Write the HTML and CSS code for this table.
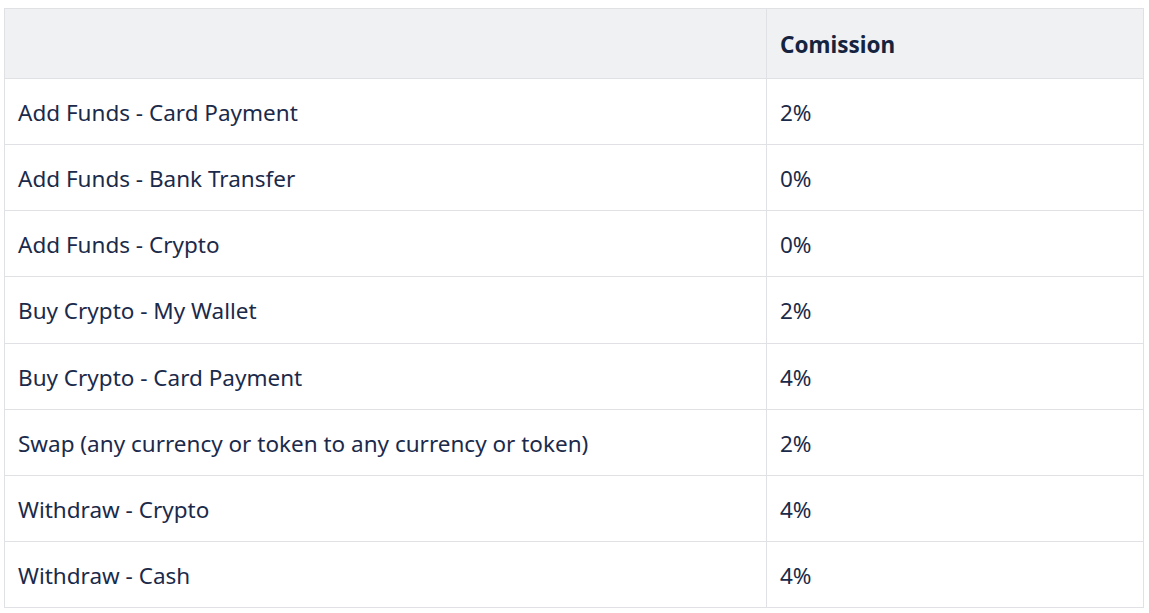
FILE: index.html
```html
<!DOCTYPE html>
<html>
<head>
<meta charset="utf-8">
<link rel="stylesheet" href="styles.css">
</head>
<body>
<table class="fees">
  <colgroup>
    <col class="col-name">
    <col class="col-fee">
  </colgroup>
  <thead>
    <tr><th></th><th>Comission</th></tr>
  </thead>
  <tbody>
    <tr><td>Add Funds - Card Payment</td><td>2%</td></tr>
    <tr><td>Add Funds - Bank Transfer</td><td>0%</td></tr>
    <tr><td>Add Funds - Crypto</td><td>0%</td></tr>
    <tr><td>Buy Crypto - My Wallet</td><td>2%</td></tr>
    <tr><td>Buy Crypto - Card Payment</td><td>4%</td></tr>
    <tr><td>Swap (any currency or token to any currency or token)</td><td>2%</td></tr>
    <tr><td>Withdraw - Crypto</td><td>4%</td></tr>
    <tr><td>Withdraw - Cash</td><td>4%</td></tr>
  </tbody>
</table>
</body>
</html>
```
FILE: styles.css
```css
html, body {
  margin: 0;
  background: #ffffff;
}
body {
  padding: 8px 5px 0 4px;
  font-family: "Noto Sans", "Open Sans", sans-serif;
  color: #1b2a4a;
}
.fees {
  width: 1140px;
  table-layout: fixed;
  border-collapse: collapse;
  font-size: 22.5px;
}
.fees th, .fees td {
  border: 1px solid #dfe1e5;
  text-align: left;
  padding: 2px 13px 0;
  vertical-align: middle;
  white-space: nowrap;
}
.fees thead th {
  background: #f0f1f3;
  height: 67px;
  font-weight: 700;
  color: #15233f;
}
.fees tbody td {
  height: 63.15px;
}
.col-name {
  width: 762px;
}
```
